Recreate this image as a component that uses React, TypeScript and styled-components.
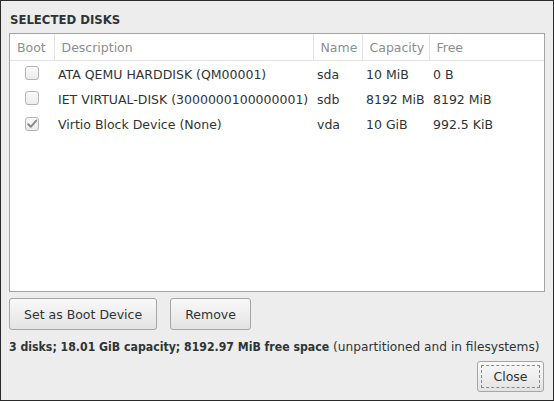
import styled, { createGlobalStyle } from 'styled-components';

const GlobalStyle = createGlobalStyle`
  html, body {
    margin: 0;
    padding: 0;
    background: #ededed;
  }
  * {
    box-sizing: border-box;
  }
`;

type Disk = {
  boot: boolean;
  description: string;
  name: string;
  capacity: string;
  free: string;
};

const disks: Disk[] = [
  { boot: false, description: 'ATA QEMU HARDDISK (QM00001)', name: 'sda', capacity: '10 MiB', free: '0 B' },
  {
    boot: false,
    description: 'IET VIRTUAL-DISK (3000000100000001)',
    name: 'sdb',
    capacity: '8192 MiB',
    free: '8192 MiB',
  },
  { boot: true, description: 'Virtio Block Device (None)', name: 'vda', capacity: '10 GiB', free: '992.5 KiB' },
];

const App = () => {
  return (
    <>
      <GlobalStyle />
      <Dialog>
        <Title>SELECTED DISKS</Title>
        <TableFrame>
          <Table>
            <colgroup>
              <col style={{ width: 44 }} />
              <col style={{ width: 259 }} />
              <col style={{ width: 49 }} />
              <col style={{ width: 67 }} />
              <col />
            </colgroup>
            <thead>
              <tr>
                <HeadCell>Boot</HeadCell>
                <HeadCell>Description</HeadCell>
                <HeadCell>Name</HeadCell>
                <HeadCell>Capacity</HeadCell>
                <HeadCell last>Free</HeadCell>
              </tr>
            </thead>
            <tbody>
              {disks.map((d) => (
                <tr key={d.name}>
                  <CheckCell>
                    <Check checked={d.boot}>
                      {d.boot && (
                        <svg width="12" height="12" viewBox="0 0 12 12" fill="none">
                          <path
                            d="M2.2 6.2L4.8 8.8L10.2 2.6"
                            stroke="#8a8a8a"
                            strokeWidth="2"
                            strokeLinecap="round"
                            strokeLinejoin="round"
                          />
                        </svg>
                      )}
                    </Check>
                  </CheckCell>
                  <Cell>{d.description}</Cell>
                  <Cell>{d.name}</Cell>
                  <Cell>{d.capacity}</Cell>
                  <Cell>{d.free}</Cell>
                </tr>
              ))}
            </tbody>
          </Table>
        </TableFrame>
        <ButtonRow>
          <Button>Set as Boot Device</Button>
          <Button>Remove</Button>
        </ButtonRow>
        <Summary>
          <Strong>3 disks; 18.01 GiB capacity; 8192.97 MiB free space</Strong> (unpartitioned and in filesystems)
        </Summary>
        <Footer>
          <CloseButton>
            <FocusRing>Close</FocusRing>
          </CloseButton>
        </Footer>
      </Dialog>
    </>
  );
};

export default App;

const Dialog = styled.div`
  width: 554px;
  height: 401px;
  border: 1px solid #2a2a2a;
  background: #ededed;
  padding: 0 8px;
  display: flex;
  flex-direction: column;
  font-family: 'DejaVu Sans', 'Liberation Sans', sans-serif;
  font-size: 12.5px;
  color: #2e3436;
`;

const Strong = styled.b`
  font-family: 'DejaVu Sans Condensed', 'DejaVu Sans', sans-serif;
  font-stretch: condensed;
  font-weight: bold;
`;

const Title = styled(Strong)`
  display: block;
  height: 32px;
  line-height: 38px;
  padding-left: 1px;
  font-size: 13px;
`;

const TableFrame = styled.div`
  height: 259px;
  background: #fff;
  border: 1px solid #a4a4a4;
`;

const Table = styled.table`
  width: 100%;
  border-collapse: collapse;
  table-layout: fixed;
`;

const HeadCell = styled.th<{ last?: boolean }>`
  height: 26px;
  padding: 2px 0 0 7px;
  text-align: left;
  font-weight: normal;
  color: #8b8e8f;
  border-bottom: 1px solid #e4e4e4;
  border-right: ${(p) => (p.last ? 'none' : '1px solid #e4e4e4')};
  white-space: nowrap;
  overflow: hidden;
`;

const Cell = styled.td`
  height: 25.5px;
  padding: 2px 0 0 4px;
  white-space: nowrap;
  overflow: hidden;
  color: #2e3436;
`;

const CheckCell = styled.td`
  height: 25.5px;
  padding: 0 0 0 15px;
`;

const Check = styled.div<{ checked: boolean }>`
  width: 14px;
  height: 14px;
  border: 1px solid #b4b4b4;
  border-radius: 3px;
  background: linear-gradient(#fafafa, #ececec);
  display: flex;
  align-items: center;
  justify-content: center;
`;

const ButtonRow = styled.div`
  display: flex;
  gap: 13px;
  margin-top: 6px;
`;

const Button = styled.button`
  height: 32px;
  padding: 0 14px;
  border: 1px solid #a6a6a6;
  border-radius: 3px;
  background: linear-gradient(#f9f9f9, #e3e3e3);
  font-family: inherit;
  font-size: 12.5px;
  color: #2e3436;
`;

const Summary = styled.div`
  margin-top: 7px;
  height: 20px;
  line-height: 20px;
  white-space: nowrap;
  font-size: 12.2px;
  color: #2e3436;
`;

const Footer = styled.div`
  display: flex;
  justify-content: flex-end;
  margin-top: 4px;
  padding-right: 1px;
`;

const CloseButton = styled.button`
  width: 67px;
  height: 31px;
  padding: 3px;
  border: 1px solid #a6a6a6;
  border-radius: 3px;
  background: linear-gradient(#f9f9f9, #e3e3e3);
  font-family: inherit;
  font-size: 12.5px;
  color: #2e3436;
`;

const FocusRing = styled.div`
  height: 100%;
  border: 1px dashed #8a8a8a;
  display: flex;
  align-items: center;
  justify-content: center;
`;
